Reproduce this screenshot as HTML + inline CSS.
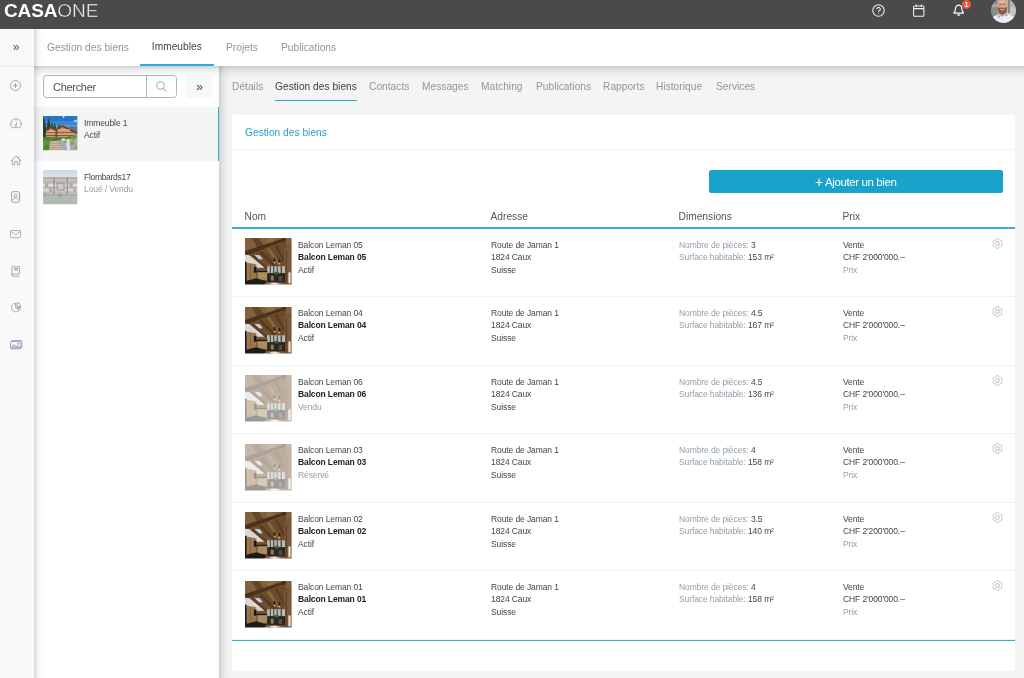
<!DOCTYPE html>
<html lang="fr">
<head>
<meta charset="utf-8">
<title>CASAONE</title>
<style>
*{box-sizing:border-box;margin:0;padding:0}
html,body{width:1024px;height:678px;overflow:hidden;background:#f4f4f4;font-family:"Liberation Sans",sans-serif;color:#333}
svg{display:block;overflow:visible}
#top{position:absolute;left:0;top:0;width:1024px;height:29px;background:#4a4a4a;z-index:30;overflow:hidden}
#logo{position:absolute;left:4px;top:0.1px;height:21px;line-height:21px;color:#fff;font-size:19px;white-space:nowrap;letter-spacing:-0.15px}
#logo b{font-weight:700}
#logo span{font-weight:400;letter-spacing:0;-webkit-text-stroke:0.5px #4a4a4a}
#top svg{position:absolute;fill:none;stroke:#f2f2f2;stroke-width:1.05}
#badge{position:absolute;left:962px;top:0;width:9px;height:9px;border-radius:50%;background:#f0553a;color:#fff;font-size:7px;font-weight:700;line-height:9px;text-align:center;letter-spacing:0}
#avatar{position:absolute;left:990.8px;top:-2.3px;width:25.4px;height:25.4px;border-radius:50%;overflow:hidden}
#side{position:absolute;left:0;top:29px;width:34px;height:649px;background:#f9f9f9;z-index:25}
#side .div{position:absolute;left:0;top:37px;width:34px;height:1px;background:#e9eaeb}
#side svg{position:absolute;fill:none;stroke:#929db0;stroke-width:0.9}
#side .chev{position:absolute;left:0;top:0.7px;width:31px;height:37px;line-height:35px;text-align:center;font-size:12px;color:#555;letter-spacing:-1px}
#nav{position:absolute;left:34px;top:29px;width:990px;height:37px;background:#fff;z-index:20;}
#nav a{position:absolute;top:0.3px;margin-left:0.5px;height:37px;line-height:37px;font-size:10.2px;color:#8c97a1;white-space:nowrap}
#nav a.on{color:#444;transform:translate(-1.2px,-1.3px)}
#nav .ul{position:absolute;left:106px;top:35.2px;width:74px;height:1.7px;background:#2fadd1}
#list{position:absolute;left:34px;top:66px;width:185px;height:612px;background:#fff;z-index:10}
#search{position:absolute;left:9px;top:9px;width:133.5px;height:23px;border:1px solid #adb6c3;border-radius:3.5px;background:#fff}
#search span{position:absolute;left:9px;top:0.7px;line-height:21px;font-size:11px;color:#4a5058;letter-spacing:-0.3px}
#search i{position:absolute;left:101.5px;top:0;width:1px;height:21px;background:#adb6c3}
#search svg{position:absolute;left:112px;top:5px;width:11px;height:11px;fill:none;stroke:#a0aab8;stroke-width:1.05}
#exp{position:absolute;left:151.7px;top:9.1px;width:26.2px;height:23px;background:#f8f8f8;border-radius:3.5px;text-align:center;line-height:24px;font-size:12px;color:#444;letter-spacing:-1px}
.it{position:absolute;left:0;width:185px;height:53.5px}
.it.on{background:#f4f6f6;border-right:1.7px solid #2fb0d3}
.it svg{position:absolute;left:9.2px;top:9.3px;width:34.4px;height:34.3px}
.it p{position:absolute;left:49.9px;font-size:8.5px;line-height:12px;white-space:nowrap;color:#454545}
.it p.g{color:#8c97a1}
#main{position:absolute;left:219px;top:66px;width:805px;height:612px;background:#f4f4f4}
#tabs a{position:absolute;top:13.3px;transform:translateY(0.5px);will-change:transform;height:14px;line-height:14px;font-size:10.2px;color:#8c97a1;white-space:nowrap}
#tabs a.on{color:#404040}
#tabs .ul{position:absolute;left:55.5px;top:33.5px;width:82px;height:1.5px;background:#2ba6cb}
#card{position:absolute;left:13px;top:49px;width:782.5px;height:556px;background:#fff;border-radius:2px}
#ci{position:absolute;left:0;top:-1px;width:100%;height:100%}
#card h2{position:absolute;left:12.5px;top:11.5px;font-size:10.2px;font-weight:400;line-height:14px;color:#2b9fc4}
#card .hl{position:absolute;left:0;top:34.5px;width:100%;height:1px;background:#f3f4f5}
#btn{position:absolute;left:477px;top:56.4px;width:293.5px;height:23px;background:#18a4c8;border-radius:2.5px;color:#fff;font-size:11.5px;line-height:24.6px;text-align:center}
.th0{position:absolute;top:94.8px;font-size:10.2px;line-height:14px;color:#555}
.bl{position:absolute;left:0;width:100%;height:1.6px;background:#33b0d3}
.row{position:absolute;left:0;width:100%;height:68.5px}
.row .th{position:absolute;left:13px;top:9px;width:46.6px;height:46.6px}
.fd{opacity:.45}
.row .c{position:absolute;top:9.5px;font-size:8.5px;line-height:12.4px;white-space:nowrap;color:#454545}
.row .c b{font-weight:700;letter-spacing:-0.12px;color:#222}
.g{color:#939eaa !important}
.c1{left:66px}.c2{left:258.5px}.c3{left:446.5px}.c4{left:610.9px}
.gear{position:absolute;left:759.7px;top:8.7px;width:11px;height:11px;fill:none;stroke:#b8bcc1;stroke-width:0.95}
.sep{position:absolute;left:0;top:67px;width:100%;height:1px;background:#f1f2f3}
#nav a,#tabs a,#card h2,.th0{letter-spacing:0.02px}
#btn{letter-spacing:-0.4px}
.row .c,.it p{letter-spacing:-0.1px}
#sh1{position:absolute;left:34px;top:65.6px;width:990px;height:12.5px;z-index:19;background:linear-gradient(to bottom,rgba(40,55,65,.23) 0%,rgba(40,55,65,.13) 22%,rgba(40,55,65,.06) 50%,rgba(40,55,65,.02) 78%,rgba(40,55,65,0) 100%)}
#sh2{position:absolute;left:219px;top:66px;width:13px;height:612px;z-index:9;background:linear-gradient(to right,rgba(40,55,65,.19) 0%,rgba(40,55,65,.14) 15%,rgba(40,55,65,.065) 35%,rgba(40,55,65,.028) 58%,rgba(40,55,65,.008) 80%,rgba(40,55,65,0) 100%)}
#sh3{position:absolute;left:34px;top:29px;width:10px;height:649px;z-index:24;background:linear-gradient(to right,rgba(40,55,65,.19) 0%,rgba(40,55,65,.14) 15%,rgba(40,55,65,.065) 35%,rgba(40,55,65,.028) 58%,rgba(40,55,65,.008) 80%,rgba(40,55,65,0) 100%)}
#nav a,.it p,.row .c,.th0,#card h2,#btn,#search span,#logo,#side .chev,#exp,#badge{will-change:transform}
#card h2{transform:translateY(-0.5px)}
.th0{transform:translate(-0.5px,0.5px)}

</style>
</head>
<body>
<svg width="0" height="0" style="position:absolute">
  <defs>
    <filter id="bl" x="0" y="0" width="100%" height="100%"><feGaussianBlur stdDeviation="0.7"/></filter>
    <filter id="bl2" x="0" y="0" width="100%" height="100%"><feGaussianBlur stdDeviation="0.5"/></filter>
    <clipPath id="c47"><rect width="47" height="47"/></clipPath>
    <clipPath id="c34"><rect width="34" height="34"/></clipPath>
    <g id="interior" clip-path="url(#c47)">
      <g filter="url(#bl)">
        <rect x="-3" y="-3" width="53" height="53" fill="#75552f"/>
        <polygon points="-3,-3 50,-3 50,6 -3,15" fill="#80603c"/>
        <polygon points="5,-3 12,-3 20,9 13,11" fill="#624627"/>
        <polygon points="20,-3 28,-3 30,6 24,7" fill="#8c6c44"/>
        <polygon points="-3,14 40,0 42,2 4,17 -3,18" fill="#48331f"/>
        <polygon points="38,-3 41.500,-3 40,11 37,11" fill="#44301d"/>
        <polygon points="3,17 41,3 41,30 28,28" fill="#6d4c2c"/>
        <polygon points="14,14 17,13 31,28 28,28" fill="#523a22"/>
        <polygon points="22,11 25,10 36,27 33,27" fill="#876642"/>
        <polygon points="30,8 32.500,7 40,22 40,26" fill="#573d24"/>
        <polygon points="-3,16.500 4.500,17.500 20,30 12,30 -3,26.500" fill="#dad7d4"/>
        <polygon points="9.500,17 15,17.500 18,21.500 13,22" fill="#c3cdd8"/>
        <polygon points="5,17 9,17 25,31 21,31" fill="#5e3f27"/>
        <rect x="39.700" y="10" width="11" height="40" fill="#7d5838"/>
        <rect x="41" y="12" width="1.500" height="36" fill="#624428"/>
        <rect x="22.300" y="28.500" width="18" height="7" fill="#b9baba"/>
        <rect x="25" y="28.500" width="1" height="8" fill="#3a3632"/><rect x="28.500" y="28.500" width="1" height="8" fill="#3a3632"/><rect x="32" y="28.500" width="1" height="8" fill="#3a3632"/><rect x="36" y="28.500" width="1.200" height="8" fill="#3a3632"/>
        <rect x="-3" y="24" width="4.700" height="22" fill="#16161b"/>
        <polygon points="1.700,25 11.500,26.500 11.500,41 1.700,43" fill="#9b774b"/>
        <rect x="5" y="26" width="0.600" height="16" fill="#7b5a38"/>
        <rect x="9" y="29" width="2.500" height="6" fill="#17171b"/>
        <rect x="11.500" y="33" width="11" height="1.600" fill="#1f1f24"/>
        <rect x="12.800" y="34.600" width="9.500" height="7.600" fill="#ad8c60"/>
        <polygon points="-3,44.500 11.500,40.500 22,44 17,50 -3,50" fill="#1b1a1f"/>
        <rect x="22.500" y="35.500" width="18" height="10" fill="#2a2521"/>
        <rect x="26" y="38" width="3" height="5" fill="#8d7a66"/><rect x="34" y="38.500" width="3.500" height="5" fill="#5a4c40"/>
        <ellipse cx="32" cy="35.500" rx="2.500" ry="1.500" fill="#445e36"/>
        <rect x="43.800" y="34.700" width="2.200" height="11" fill="#efe3d2"/>
        <ellipse cx="29.800" cy="22.500" rx="1.100" ry="2.600" fill="#2a2217"/><ellipse cx="34.700" cy="23.500" rx="1.100" ry="2.600" fill="#2a2217"/>
        <circle cx="29.800" cy="24.600" r="0.900" fill="#dcbc68"/><circle cx="34.700" cy="25.600" r="0.900" fill="#dcbc68"/>
        <polygon points="17,50 22,44.500 40,45 40,50" fill="#7d6046"/>
        <polygon points="24,46 30,44.800 36,46.500 30,47.500" fill="#e6ddd2"/>
      </g>
    </g>
    <g id="chalet" clip-path="url(#c34)">
      <g filter="url(#bl)">
        <rect x="-3" y="-3" width="40" height="40" fill="#2776c8"/>
        <rect x="-3" y="5" width="40" height="5" fill="#3a86d2"/>
        <rect x="-3" y="9" width="40" height="8" fill="#5d9edc"/>
        <polygon points="19,0.500 21.500,0 20.500,2.500" fill="#cfe2f5"/>
        <polygon points="29,5 34,3.500 34,6.500" fill="#a9cdf0"/>
        <polygon points="24,11.500 28,10 37,11.500 37,19 30,16" fill="#587a8c"/>
        <polygon points="-3,1 0.500,1.500 2,6 3,12 3.500,22 2,34 -3,34" fill="#23401f"/>
        <polygon points="3,14 5.700,1.500 8.400,14" fill="#274726"/>
        <polygon points="7,14 9,6 11,14" fill="#2d4f2b"/>
        <polygon points="9.500,14 11.500,6.500 13.500,14" fill="#2d4f2b"/>
        <polygon points="13.500,13 16,7.500 18,13" fill="#355a33"/>
        <polygon points="2.500,15.500 7.500,10.700 13,13.700 19,9 34,16.500 34,22 3,22" fill="#c59470"/>
        <polygon points="2.500,15.500 7.500,10.500 13,13.500 13,15.200 7.500,12.200 3,16.500" fill="#6f3824"/>
        <polygon points="13,13.500 19,8.800 34,16 34,18 19,10.800 13.500,15.200" fill="#6f3824"/>
        <rect x="3.500" y="14.600" width="9" height="1.500" fill="#d9b38f"/>
        <rect x="14.500" y="13" width="12" height="1.700" fill="#d6ae8a"/>
        <rect x="3" y="16.100" width="29" height="1.100" fill="#8a5236"/>
        <rect x="3" y="17.200" width="29" height="1.600" fill="#d3a985"/>
        <rect x="3" y="18.800" width="29" height="1.100" fill="#8a5236"/>
        <rect x="3" y="19.900" width="29" height="1.600" fill="#c99c78"/>
        <rect x="12.300" y="13.500" width="1.700" height="8.500" fill="#7d432a"/>
        <rect x="-3" y="21" width="40" height="5" fill="#557f33"/>
        <circle cx="13" cy="22.500" r="1.600" fill="#3f7a2b"/><circle cx="26" cy="21" r="1.800" fill="#4a8a30"/><circle cx="31" cy="20.500" r="2" fill="#56953a"/><circle cx="5" cy="22" r="1.500" fill="#477f2d"/>
        <rect x="-3" y="24" width="11" height="13" fill="#62923a"/>
        <circle cx="3.500" cy="31" r="2.500" fill="#4f8530"/>
        <polygon points="7,25 15,24.500 24,37 6,37" fill="#ccbaa5"/>
        <rect x="7" y="26.500" width="10" height="0.800" fill="#a5937f"/><rect x="6.500" y="28.700" width="12" height="0.800" fill="#a5937f"/><rect x="6.500" y="31" width="14" height="0.800" fill="#a5937f"/><rect x="6" y="33.200" width="16" height="0.700" fill="#a5937f"/>
        <polygon points="15,24.500 20,23 37,21.500 37,37 24,37" fill="#a6abb2"/>
        <polygon points="22,24 26,22.500 27,34 24,34" fill="#d9dde2"/>
        <circle cx="22" cy="25.500" r="1.500" fill="#8aa746"/><circle cx="29" cy="27" r="2" fill="#86a544"/><circle cx="33" cy="31.500" r="1.700" fill="#8aa746"/><circle cx="30.500" cy="23" r="1.300" fill="#7fa044"/>
        <rect x="18.500" y="22.300" width="3" height="2.200" fill="#e6e9ec"/>
      </g>
    </g>
    <g id="flom" clip-path="url(#c34)">
      <g filter="url(#bl)">
        <rect x="-3" y="-3" width="40" height="40" fill="#c6d7e8"/>
        <rect x="-3" y="4" width="40" height="4" fill="#d3dde6"/>
        <rect x="-3" y="7.500" width="40" height="18" fill="#cfc7be"/>
        <rect x="-3" y="7.300" width="40" height="1.500" fill="#9a9896"/>
        <rect x="-3" y="9.500" width="40" height="2.500" fill="#b9b3ad"/>
        <rect x="-3" y="12.200" width="40" height="1" fill="#a19d99"/>
        <rect x="-3" y="14" width="40" height="2.500" fill="#ddd6cd"/>
        <rect x="-3" y="17" width="40" height="1" fill="#a19d99"/>
        <rect x="-3" y="18.500" width="40" height="2.500" fill="#d9d2ca"/>
        <rect x="-3" y="21.500" width="40" height="1" fill="#aaa6a1"/>
        <rect x="10.300" y="7.500" width="1.300" height="18" fill="#858280"/><rect x="23.300" y="7.500" width="1.300" height="18" fill="#858280"/>
        <rect x="13.500" y="12.500" width="8" height="8" fill="#96938f"/><rect x="14.800" y="13.800" width="5.400" height="5.400" fill="#cbc4bc"/>
        <rect x="2" y="13" width="3" height="4" fill="#a7a29d"/><rect x="6" y="18" width="3" height="4" fill="#a7a29d"/><rect x="26" y="13" width="3.500" height="4" fill="#a7a29d"/><rect x="30" y="18" width="3" height="4" fill="#aaa6a0"/>
        <rect x="-3" y="24.500" width="40" height="13" fill="#a4b1a7"/>
        <rect x="-3" y="23.500" width="40" height="1.500" fill="#95a297"/>
        <circle cx="17" cy="25" r="1.700" fill="#82917f"/><circle cx="2" cy="24.500" r="1.700" fill="#8c9b8a"/>
      </g>
    </g>
    <g id="gear"><path d="M9.50 5.50 L9.50 5.29 L9.51 5.08 L9.53 4.86 L9.58 4.63 L9.85 4.34 L10.10 4.01 L10.09 3.74 L10.04 3.48 L9.95 3.23 L9.83 3.00 L9.69 2.78 L9.52 2.58 L9.32 2.41 L9.09 2.27 L8.68 2.32 L8.29 2.40 L8.07 2.33 L7.87 2.24 L7.68 2.14 L7.50 2.04 L7.32 1.93 L7.14 1.81 L6.96 1.69 L6.79 1.54 L6.66 1.15 L6.50 0.77 L6.27 0.65 L6.02 0.56 L5.76 0.52 L5.50 0.50 L5.24 0.52 L4.98 0.56 L4.73 0.65 L4.50 0.77 L4.34 1.15 L4.21 1.54 L4.04 1.69 L3.86 1.81 L3.68 1.93 L3.50 2.04 L3.32 2.14 L3.13 2.24 L2.93 2.33 L2.71 2.40 L2.32 2.32 L1.91 2.27 L1.68 2.41 L1.48 2.58 L1.31 2.78 L1.17 3.00 L1.05 3.23 L0.96 3.48 L0.91 3.74 L0.90 4.01 L1.15 4.34 L1.42 4.63 L1.47 4.86 L1.49 5.08 L1.50 5.29 L1.50 5.50 L1.50 5.71 L1.49 5.92 L1.47 6.14 L1.42 6.37 L1.15 6.66 L0.90 6.99 L0.91 7.26 L0.96 7.52 L1.05 7.77 L1.17 8.00 L1.31 8.22 L1.48 8.42 L1.68 8.59 L1.91 8.73 L2.32 8.68 L2.71 8.60 L2.93 8.67 L3.13 8.76 L3.32 8.86 L3.50 8.96 L3.68 9.07 L3.86 9.19 L4.04 9.31 L4.21 9.46 L4.34 9.85 L4.50 10.23 L4.73 10.35 L4.98 10.44 L5.24 10.48 L5.50 10.50 L5.76 10.48 L6.02 10.44 L6.27 10.35 L6.50 10.23 L6.66 9.85 L6.79 9.46 L6.96 9.31 L7.14 9.19 L7.32 9.07 L7.50 8.96 L7.68 8.86 L7.87 8.76 L8.07 8.67 L8.29 8.60 L8.68 8.68 L9.09 8.73 L9.32 8.59 L9.52 8.42 L9.69 8.22 L9.83 8.00 L9.95 7.77 L10.04 7.52 L10.09 7.26 L10.10 6.99 L9.85 6.66 L9.58 6.37 L9.53 6.14 L9.51 5.92 L9.50 5.71Z" stroke-linejoin="round"/><circle cx="5.500" cy="5.500" r="2"/></g>
  </defs>
</svg>
<div id="top">
  <div id="logo"><b>CASA</b><span>ONE</span></div>
  <svg style="left:872px;top:4px;width:13px;height:13px" viewBox="0 0 13 13"><circle cx="6.5" cy="6.5" r="5.7"/><path d="M4.7 5.2a1.8 1.8 0 1 1 2.600 1.600c-.5.3-.8.600-.8 1.200"/><circle cx="6.500" cy="9.600" r="0.500" fill="#fff" stroke="none"/></svg>
  <svg style="left:913px;top:4px;width:11.500px;height:13px" viewBox="0 0 11.500 13"><rect x="0.600" y="2" width="10.300" height="10.300" rx="1"/><path d="M0.600 4.600h10.300M3.200 0.500v2.300M8.300 0.500v2.300"/></svg>
  <svg style="left:953px;top:3.500px;width:11.400px;height:12.300px;stroke:#fff;stroke-width:1.4" viewBox="0 0 13 14"><path d="M6.500 1.200c-2.200 0-3.600 1.700-3.600 3.800 0 2.600-.8 3.800-1.700 4.600v.7h10.600v-.7c-.9-.8-1.700-2-1.700-4.600 0-2.100-1.400-3.800-3.600-3.800zM5.200 12a1.400 1.400 0 0 0 2.600 0" stroke-linejoin="round"/></svg>
  <div id="badge">1</div>
  <div id="avatar"><svg width="25.400" height="25.400" viewBox="0 0 25.400 25.400" style="stroke:none;position:static"><g filter="url(#bl2)"><rect x="-1" y="-1" width="28" height="28" fill="#a6a6a2"/><rect x="-1" y="-1" width="7.500" height="28" fill="#8b8c89"/><rect x="16" y="-1" width="11" height="20" fill="#b4b4b1"/><rect x="17.400" y="0" width="1.200" height="15" fill="#6b6b68"/><rect x="19" y="9" width="7" height="8" fill="#c4c4c1"/><rect x="0" y="6" width="6" height="3" fill="#a9a9a4"/><path d="M6.300 8c0-5 2-8.500 5-8.500s5 3.500 5 8.500c0 5-2 8.800-5 8.800s-5-3.800-5-8.800z" fill="#d6a58b"/><path d="M8 3.500q3.300-2 6.600 0v2q-3.300-1.200-6.600 0z" fill="#e2b79f"/><path d="M8.300 6.300h2M12.300 6.300h2" stroke="#5a3d30" stroke-width="0.800"/><path d="M6.500 8.800c1.400 1.400 2.800.9 4.800.9s3.400.5 4.800-.9c.3 4.500-1.700 7.700-4.800 7.700s-5.100-3.200-4.800-7.700z" fill="#8a5a45"/><path d="M9.300 11.300q2 1.300 4.100 0" stroke="#f0e2dc" stroke-width="0.800" fill="none"/><path d="M-1 27c0-6.500 3.500-9.300 8.500-10.800l3.700 2.600 4.200-3.600c6 1.500 11 4.300 11 11.800z" fill="#e8ecf8"/><path d="M9 16l2.300 2.800 2.800-2.600-2.600 1z" fill="#c99a80"/><path d="M7.300 16.400l2.200 2.800-2.700.5zM15.400 15.500l1.400 2.500-2.900-.1z" fill="#8d9cd2"/></g></svg></div>
</div>
<div id="side">
  <div class="chev">»</div>
  <div class="div"></div>
  <svg style="left:9.500px;top:51px;width:11px;height:11px" viewBox="0 0 11 11"><circle cx="5.500" cy="5.500" r="5"/><path d="M5.500 3v5M3 5.500h5"/></svg>
  <svg style="left:9.800px;top:89.700px;width:12px;height:9.200px" viewBox="0 0 13 10"><path d="M2.300 9.400h8.400c1-.9 1.700-2.200 1.700-3.600a5.900 5.900 0 0 0-11.800 0c0 1.400.7 2.700 1.700 3.600z" stroke-linejoin="round"/><path d="M6.400 6.600l1.200-3.400M6.500 0.800v1M1.300 5.600h1M10.700 5.600h1"/><circle cx="6.300" cy="7.200" r="0.800"/></svg>
  <svg style="left:9.800px;top:126px;width:12px;height:10px" viewBox="0 0 12 10"><path d="M0.800 5.900L6 1l5.200 4.900M2.300 4.700v4.900h2.400V6.600h2.600v3h2.400V4.700M8.600 3.300V1.700" stroke-linejoin="round"/></svg>
  <svg style="left:10.500px;top:162px;width:10px;height:12px" viewBox="0 0 10 12"><rect x="0.600" y="0.700" width="7.800" height="10.600" rx="1.200"/><circle cx="4.500" cy="4.700" r="1.500"/><path d="M2 9.200c.2-1.600 1.200-2.300 2.500-2.300s2.300.7 2.500 2.300M8.400 3h1M8.400 5.300h1M8.400 7.600h1"/></svg>
  <svg style="left:10.300px;top:200.800px;width:11px;height:8.200px" viewBox="0 0 12 9"><rect x="0.600" y="0.600" width="10.800" height="7.800" rx="1.200"/><path d="M0.800 1.500L6 5.300l5.200-3.800"/></svg>
  <svg style="left:11.200px;top:236.800px;width:9.200px;height:11px" viewBox="0 0 10 12"><path d="M1 9.800V2a1.300 1.300 0 0 1 1.300-1.300h6.900v8H2.200A1.200 1.200 0 0 0 1 9.900a1.200 1.200 0 0 0 1.200 1.300h7" stroke-linejoin="round"/><rect x="4" y="2.800" width="3.200" height="1.600"/></svg>
  <svg style="left:10.800px;top:273.400px;width:10.600px;height:10.600px" viewBox="0 0 11 11"><path d="M4.800 1.300a4.500 4.500 0 1 0 3.800 7.200L4.800 5.800z" stroke-linejoin="round"/><path d="M6.300 0.700a4.400 4.400 0 0 1 3.900 3.700l-3.900.7zM6.700 6l3.400-.4a4 4 0 0 1-.8 2.200z" stroke-linejoin="round"/></svg>
  <svg style="left:9.800px;top:311.400px;width:12.400px;height:9.400px" viewBox="0 0 12.400 9.400"><rect x="0.600" y="1.600" width="10.200" height="7.200" rx="0.800"/><path d="M1.800 1.600V0.600h10v7.200h-1"/><path d="M1.200 8l2.900-3.400 2 2.200 1.700-1.400 2.800 2.600z" fill="#c3c9d3" stroke-width="0.700"/><circle cx="8.200" cy="3.600" r="0.700"/></svg>
</div>
<div id="nav">
  <a style="left:12px">Gestion des biens</a>
  <a class="on" style="left:118px">Immeubles</a>
  <a style="left:191.200px">Projets</a>
  <a style="left:246.400px">Publications</a>
  <div class="ul"></div>
</div>
<div id="sh1"></div><div id="sh2"></div><div id="sh3"></div>
<div id="list">
  <div id="search"><span>Chercher</span><i></i><svg viewBox="0 0 11 11"><circle cx="4.500" cy="4.500" r="3.700"/><path d="M7.200 7.200l3.300 3.300"/></svg></div>
  <div id="exp">»</div>
  <div class="it on" style="top:41px"><svg viewBox="0 0 34 34"><use href="#chalet"/></svg><p style="top:10px">Immeuble 1</p><p style="top:22.400px">Actif</p></div>
  <div class="it" style="top:94.500px"><svg viewBox="0 0 34 34" style="opacity:.88"><use href="#flom"/></svg><p style="top:10px;letter-spacing:-0.3px">Flombards17</p><p class="g" style="top:22.400px">Loué / Vendu</p></div>
</div>
<div id="main">
  <div id="tabs">
    <a style="left:13px">Détails</a>
    <a class="on" style="left:55.500px">Gestion des biens</a>
    <a style="left:149.500px">Contacts</a>
    <a style="left:203px">Messages</a>
    <a style="left:261.500px">Matching</a>
    <a style="left:316.500px">Publications</a>
    <a style="left:383.500px">Rapports</a>
    <a style="left:437px">Historique</a>
    <a style="left:496.500px">Services</a>
    <div class="ul"></div>
  </div>
  <div id="card"><div id="ci">
    <h2>Gestion des biens</h2>
    <div class="hl"></div>
    <div id="btn"><span style="font-size:14px;line-height:10px;position:relative;top:0.5px">+</span> Ajouter un bien</div>
    <div class="th0" style="left:12.500px">Nom</div>
    <div class="th0" style="left:258.500px">Adresse</div>
    <div class="th0" style="left:446.500px">Dimensions</div>
    <div class="th0" style="left:610.800px">Prix</div>
    <div class="bl" style="top:113.100px"></div>
  <div class="row" style="top:115.0px">
    <svg class="th" viewBox="0 0 47 47"><use href="#interior"/></svg>
    <div class="c c1"><p>Balcon Leman 05</p><p><b>Balcon Leman 05</b></p><p>Actif</p></div>
    <div class="c c2"><p>Route de Jaman 1</p><p>1824 Caux</p><p>Suisse</p></div>
    <div class="c c3"><p><span class="g">Nombre de pièces:</span> 3</p><p><span class="g">Surface habitable:</span> 153 m²</p></div>
    <div class="c c4"><p>Vente</p><p>CHF 2'000'000.–</p><p class="g">Prix</p></div>
    <svg class="gear" viewBox="0 0 11 11"><use href="#gear"/></svg>
    <div class="sep"></div>
  </div>
  <div class="row" style="top:183.5px">
    <svg class="th" viewBox="0 0 47 47"><use href="#interior"/></svg>
    <div class="c c1"><p>Balcon Leman 04</p><p><b>Balcon Leman 04</b></p><p>Actif</p></div>
    <div class="c c2"><p>Route de Jaman 1</p><p>1824 Caux</p><p>Suisse</p></div>
    <div class="c c3"><p><span class="g">Nombre de pièces:</span> 4.5</p><p><span class="g">Surface habitable:</span> 167 m²</p></div>
    <div class="c c4"><p>Vente</p><p>CHF 2'000'000.–</p><p class="g">Prix</p></div>
    <svg class="gear" viewBox="0 0 11 11"><use href="#gear"/></svg>
    <div class="sep"></div>
  </div>
  <div class="row" style="top:252.0px">
    <svg class="th fd" viewBox="0 0 47 47"><use href="#interior"/></svg>
    <div class="c c1"><p>Balcon Leman 06</p><p><b>Balcon Leman 06</b></p><p class="g">Vendu</p></div>
    <div class="c c2"><p>Route de Jaman 1</p><p>1824 Caux</p><p>Suisse</p></div>
    <div class="c c3"><p><span class="g">Nombre de pièces:</span> 4.5</p><p><span class="g">Surface habitable:</span> 136 m²</p></div>
    <div class="c c4"><p>Vente</p><p>CHF 2'000'000.–</p><p class="g">Prix</p></div>
    <svg class="gear" viewBox="0 0 11 11"><use href="#gear"/></svg>
    <div class="sep"></div>
  </div>
  <div class="row" style="top:320.5px">
    <svg class="th fd" viewBox="0 0 47 47"><use href="#interior"/></svg>
    <div class="c c1"><p>Balcon Leman 03</p><p><b>Balcon Leman 03</b></p><p class="g">Réservé</p></div>
    <div class="c c2"><p>Route de Jaman 1</p><p>1824 Caux</p><p>Suisse</p></div>
    <div class="c c3"><p><span class="g">Nombre de pièces:</span> 4</p><p><span class="g">Surface habitable:</span> 158 m²</p></div>
    <div class="c c4"><p>Vente</p><p>CHF 2'000'000.–</p><p class="g">Prix</p></div>
    <svg class="gear" viewBox="0 0 11 11"><use href="#gear"/></svg>
    <div class="sep"></div>
  </div>
  <div class="row" style="top:389.0px">
    <svg class="th" viewBox="0 0 47 47"><use href="#interior"/></svg>
    <div class="c c1"><p>Balcon Leman 02</p><p><b>Balcon Leman 02</b></p><p>Actif</p></div>
    <div class="c c2"><p>Route de Jaman 1</p><p>1824 Caux</p><p>Suisse</p></div>
    <div class="c c3"><p><span class="g">Nombre de pièces:</span> 3.5</p><p><span class="g">Surface habitable:</span> 140 m²</p></div>
    <div class="c c4"><p>Vente</p><p>CHF 2'200'000.–</p><p class="g">Prix</p></div>
    <svg class="gear" viewBox="0 0 11 11"><use href="#gear"/></svg>
    <div class="sep"></div>
  </div>
  <div class="row" style="top:457.5px">
    <svg class="th" viewBox="0 0 47 47"><use href="#interior"/></svg>
    <div class="c c1"><p>Balcon Leman 01</p><p><b>Balcon Leman 01</b></p><p>Actif</p></div>
    <div class="c c2"><p>Route de Jaman 1</p><p>1824 Caux</p><p>Suisse</p></div>
    <div class="c c3"><p><span class="g">Nombre de pièces:</span> 4</p><p><span class="g">Surface habitable:</span> 158 m²</p></div>
    <div class="c c4"><p>Vente</p><p>CHF 2'000'000.–</p><p class="g">Prix</p></div>
    <svg class="gear" viewBox="0 0 11 11"><use href="#gear"/></svg>
    <div class="sep"></div>
  </div>
    <div class="bl" style="top:525.500px"></div>
  </div></div>
</div>
</body>
</html>
